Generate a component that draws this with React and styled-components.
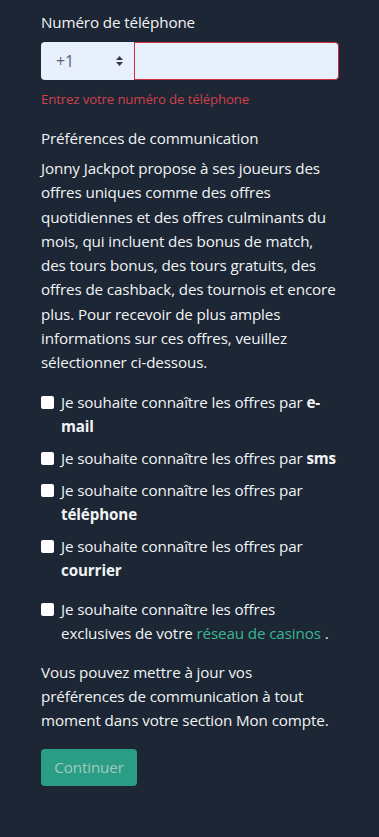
import React from 'react'
import styled, { createGlobalStyle } from 'styled-components'

const GlobalStyle = createGlobalStyle`
  html, body {
    margin: 0;
    padding: 0;
    background: #1c2634;
  }
  * { box-sizing: border-box; }
`

const Page = styled.div`
  min-height: 837px;
  background: #1c2634;
  color: #f1f3f5;
  font-family: "Open Sans", "Noto Sans", sans-serif;
  font-size: 15.2px;
  letter-spacing: -0.12px;
  line-height: 24px;
  padding: 10px 41px 40px 41px;
`

const Label = styled.div`
  line-height: 24px;
  margin-bottom: 8px;
`

const InputGroup = styled.div`
  display: flex;
  height: 38px;
  width: 298px;
`

const CountrySelect = styled.div`
  width: 93px;
  display: flex;
  align-items: center;
  justify-content: space-between;
  padding: 0 10px 0 15px;
  background: #e9f0fd;
  border-radius: 4px 0 0 4px;
  color: #5a6270;
  font-size: 16px;
`

const PhoneInput = styled.div`
  flex: 1;
  background: #e9f0fd;
  border: 1px solid #c8303e;
  border-radius: 0 4px 4px 0;
`

const ErrorText = styled.div`
  color: #d2404c;
  font-size: 13.2px;
  line-height: 20px;
  margin-top: 9px;
`

const SectionTitle = styled.div`
  margin-top: 17px;
  margin-bottom: 6px;
`

const Paragraph = styled.p`
  margin: ${p => p.$mt || 0}px 0 ${p => p.$mb || 0}px;
  line-height: 24.3px;
`

const CheckList = styled.div`
  display: flex;
  flex-direction: column;
  gap: 8px;
`

const CheckRow = styled.label`
  display: flex;
  align-items: flex-start;
  gap: 7px;
  margin-top: ${p => p.$mt || 0}px;
`

const Box = styled.span`
  flex: none;
  width: 13px;
  height: 13px;
  margin-top: 6px;
  background: #fff;
  border-radius: 2px;
`

const Strong = styled.b`
  font-weight: 700;
`

const Link = styled.a`
  color: #3bb592;
  text-decoration: none;
`

const Button = styled.button`
  margin-top: 16px;
  width: 96px;
  height: 37px;
  background: #2a9d84;
  color: #a0cbbf;
  border: none;
  border-radius: 4px;
  font-family: inherit;
  font-size: 15.2px;
  letter-spacing: -0.12px;
`

const Arrows = () => (
  <svg width="9" height="12" viewBox="0 0 9 12">
    <path d="M4.5 1 L8 5 H1 Z M4.5 11 L8 7 H1 Z" fill="#343a40" />
  </svg>
)

const items = [
  ['Je souhaite connaître les offres par ', 'e-mail'],
  ['Je souhaite connaître les offres par ', 'sms'],
  ['Je souhaite connaître les offres par ', 'téléphone'],
  ['Je souhaite connaître les offres par ', 'courrier'],
]

export default function App() {
  return (
    <>
      <GlobalStyle />
      <Page>
        <Label>Numéro de téléphone</Label>
        <InputGroup>
          <CountrySelect>
            <span>+1</span>
            <Arrows />
          </CountrySelect>
          <PhoneInput />
        </InputGroup>
        <ErrorText>Entrez votre numéro de téléphone</ErrorText>

        <SectionTitle>Préférences de communication</SectionTitle>
        <Paragraph $mb={15}>
          Jonny Jackpot propose à ses joueurs des offres uniques comme des offres quotidiennes et des offres culminants du mois, qui incluent des bonus de match, des tours bonus, des tours gratuits, des offres de cashback, des tournois et encore plus. Pour recevoir de plus amples informations sur ces offres, veuillez sélectionner ci-dessous.
        </Paragraph>

        <CheckList>
          {items.map(([t, b]) => (
            <CheckRow key={b}>
              <Box />
              <span>{t}<Strong>{b}</Strong></span>
            </CheckRow>
          ))}
          <CheckRow $mt={7}>
            <Box />
            <span>Je souhaite connaître les offres exclusives de votre <Link>réseau de casinos</Link> .</span>
          </CheckRow>
        </CheckList>

        <Paragraph $mt={15}>
          Vous pouvez mettre à jour vos préférences de communication à tout moment dans votre section Mon compte.
        </Paragraph>
        <Button>Continuer</Button>
      </Page>
    </>
  )
}
